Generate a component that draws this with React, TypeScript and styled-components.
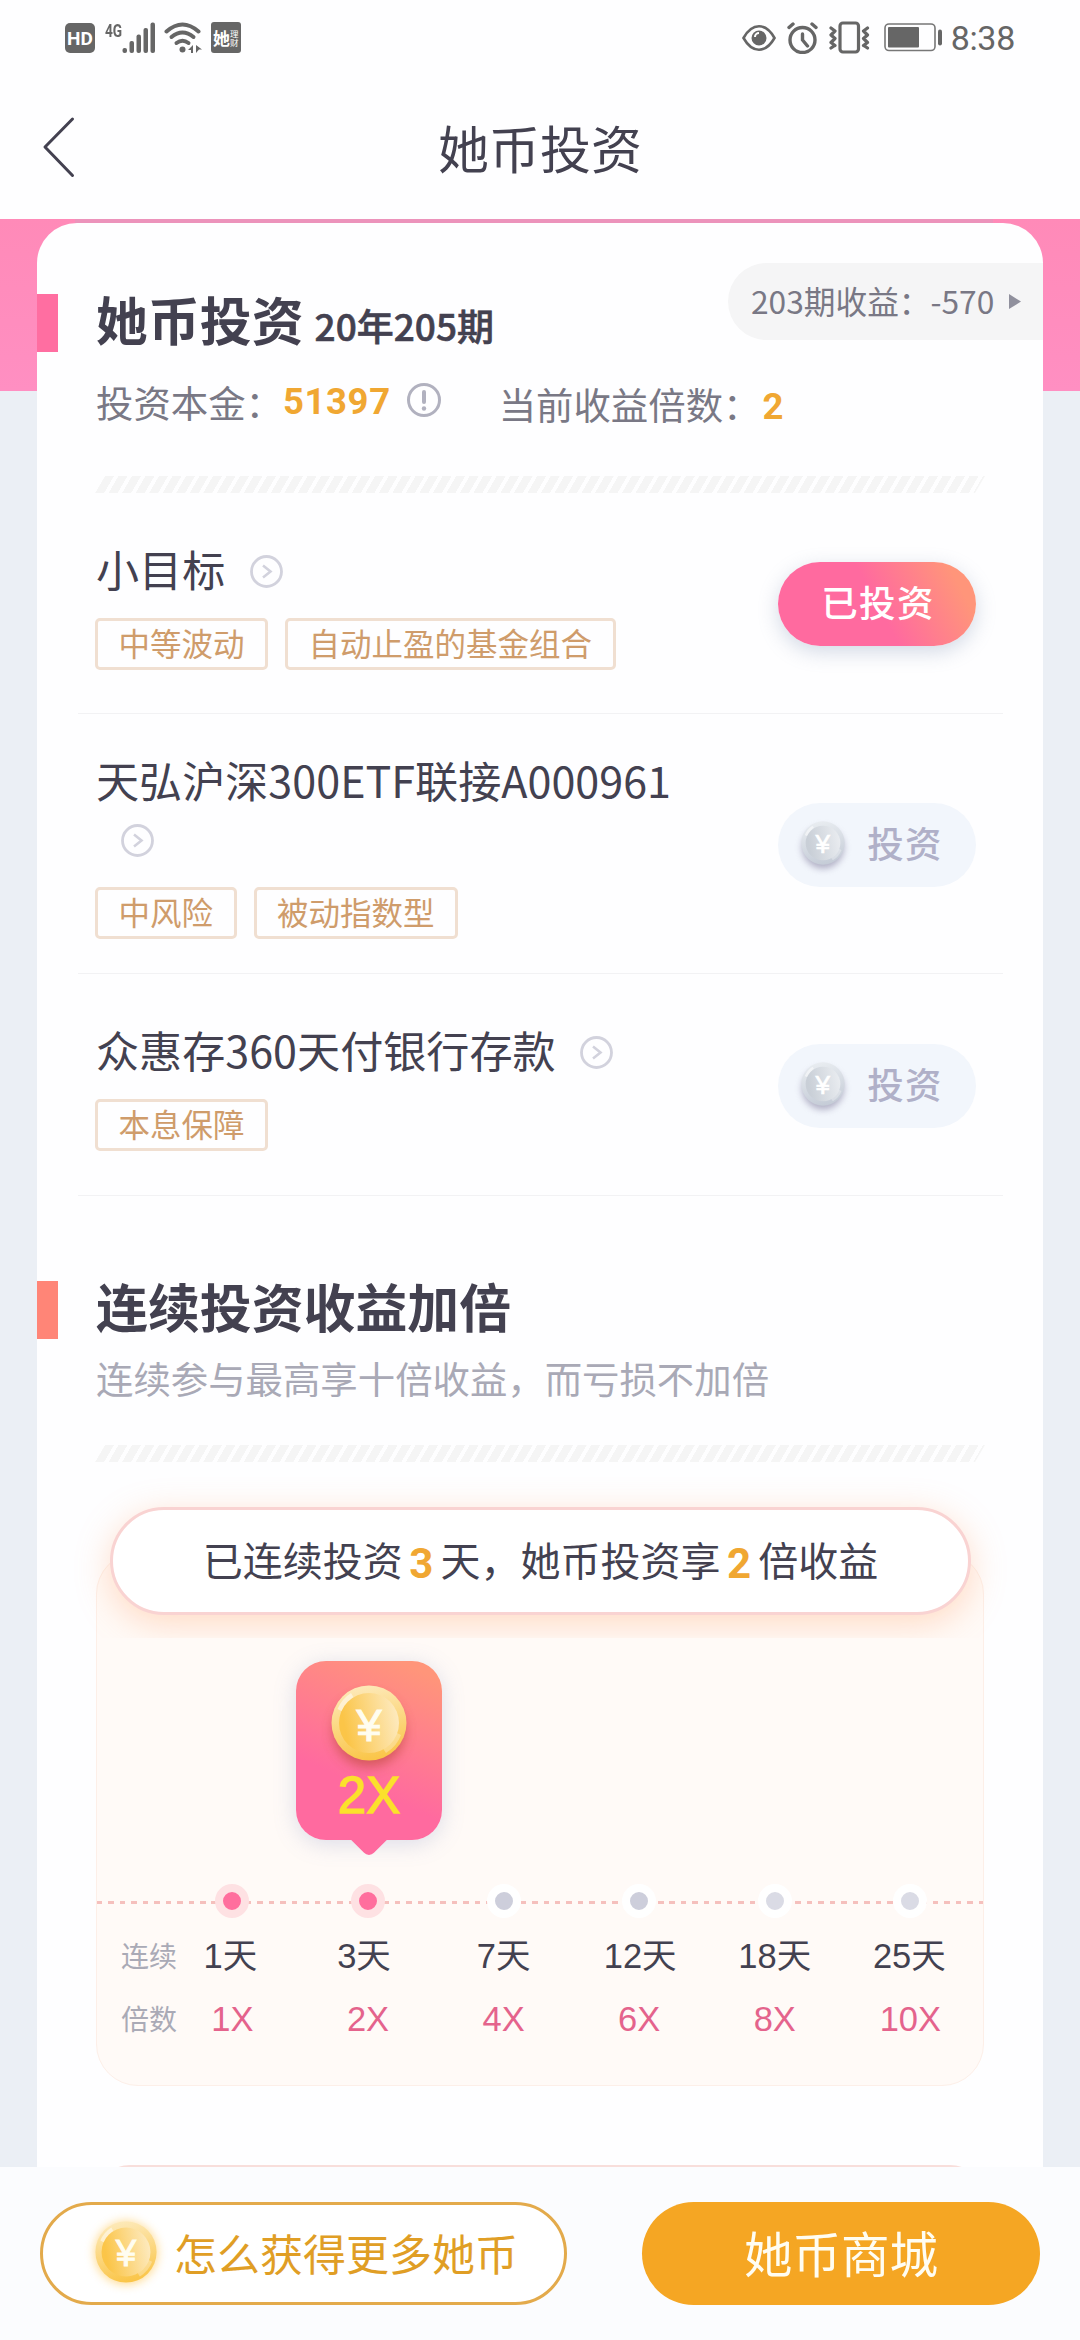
import React from "react";
import styled, { createGlobalStyle, css } from "styled-components";

const cjk = `"Noto Sans CJK SC", "Noto Sans", sans-serif`;
const ink = "#434150";

const GlobalStyle = createGlobalStyle`
  * { box-sizing: border-box; }
  body {
    margin: 0;
    background: #ebeff5;
    font-family: ${cjk};
    color: ${ink};
  }
`;

const Screen = styled.div`
  width: 1080px;
  height: 2340px;
  display: flex;
  flex-direction: column;
  overflow: hidden;
  background: #ebeff5;
`;

/* ---------- status bar ---------- */

const StatusBar = styled.div`
  height: 75px;
  flex: none;
  padding: 0 65px 0 65px;
  display: flex;
  align-items: center;
  justify-content: space-between;
  background: #fefeff;
  color: #666;
`;

const StatusGroup = styled.div`
  display: flex;
  align-items: center;
  height: 32px;
`;

const HdBadge = styled.span`
  width: 30px;
  height: 30px;
  border-radius: 5px;
  background: #666;
  color: #fff;
  font: 700 19px/31px Roboto, sans-serif;
  text-align: center;
`;

const NetworkLabel = styled.span`
  align-self: flex-start;
  width: 17px;
  margin: -1px 0 0 10px;
  font: 700 19px/20px Roboto, sans-serif;
  transform: scaleX(0.72);
  transform-origin: left;
`;

const SignalIcon = styled.svg`
  width: 33px;
  height: 32px;
`;

const WifiIcon = styled.svg`
  width: 38px;
  height: 32px;
  margin-left: 9px;
`;

const AppBadge = styled.span`
  display: flex;
  align-items: center;
  justify-content: center;
  width: 30px;
  height: 31px;
  margin-left: 9px;
  border-radius: 3px;
  background: #666;
  color: #fff;
`;

const AppBadgeMain = styled.span`
  width: 17px;
  font: 700 17px/28px ${cjk};
`;

const AppBadgeSide = styled.span`
  width: 9px;
  font: 400 8.5px/8.5px ${cjk};
`;

const StatusIcon = styled.svg<{ $gap?: number }>`
  flex: none;
  margin-left: ${(p) => p.$gap || 0}px;
  fill: none;
`;

const Clock = styled.span`
  margin-left: 9px;
  font: 400 34px/34px Roboto, sans-serif;
  letter-spacing: -0.3px;
`;

/* ---------- navigation bar ---------- */

const NavBar = styled.header`
  height: 144px;
  flex: none;
  display: grid;
  grid-template-columns: 1fr auto 1fr;
  align-items: center;
  background: #fefeff;
`;

const BackButton = styled.svg`
  width: 34px;
  height: 62px;
  margin: 0 0 1px 42px;
`;

const NavTitle = styled.h1`
  margin: 0 0 1px;
  font-size: 51px;
  line-height: 70px;
  font-weight: 400;
`;

/* ---------- content ---------- */

const Content = styled.main`
  flex: 1;
  min-height: 0;
  overflow: hidden;
  padding: 4px 37px 0;
  background:
    linear-gradient(#ec93bb, #ec93bb) 75px 0 / 918px 4px no-repeat,
    linear-gradient(#ff8ab8, #ff8fc2) 0 0 / 100% 172px no-repeat,
    #ebeff5;
`;

const Card = styled.section`
  position: relative;
  height: 2020px;
  background: #fefeff;
  border-radius: 40px 40px 0 0;
`;

const ProfitPill = styled.div`
  position: absolute;
  top: 40px;
  right: 0;
  width: 315px;
  height: 77px;
  padding: 0 0 3px 23px;
  border-radius: 39px 0 0 39px;
  background: #f5f5f6;
  color: #797885;
  display: flex;
  align-items: center;
  font-size: 31.7px;
  line-height: 70px;
  white-space: nowrap;
`;

const PlayArrow = styled.svg`
  width: 12px;
  height: 15px;
  margin: 3px 0 0 15px;
`;

const SectionHead = styled.div<{ $gap: number }>`
  display: flex;
  height: 58px;
  margin-top: ${(p) => p.$gap}px;
  &:first-child {
    margin-top: 0;
    padding-top: ${(p) => p.$gap}px;
    height: ${(p) => p.$gap + 58}px;
  }
`;

const Marker = styled.i<{ $color: string }>`
  width: 21px;
  height: 58px;
  margin-right: 38px;
  background: ${(p) => p.$color};
`;

const SectionTitle = styled.h2`
  margin: 0;
  font-size: 51.9px;
  line-height: 50px;
  font-weight: 700;
  white-space: nowrap;
`;

const Period = styled.span`
  margin-left: 11px;
  font-size: 37px;
  font-weight: 500;
  -webkit-text-stroke: 0.6px ${ink};
`;

const InfoRow = styled.div`
  display: flex;
  align-items: flex-start;
  height: 48px;
  margin: 26px 0 0 59px;
  font-size: 37.4px;
  line-height: 48px;
  color: #797885;
  white-space: nowrap;
`;

const InfoItem = styled.div<{ $left?: number; $drop?: number }>`
  display: flex;
  margin: ${(p) => p.$drop || 0}px 0 0 ${(p) => p.$left || 0}px;
`;

const Amount = styled.strong<{ $size: number; $pad?: string }>`
  font-family: Roboto, sans-serif;
  font-weight: 700;
  font-size: ${(p) => p.$size}px;
  letter-spacing: 0.6px;
  padding: ${(p) => p.$pad || "0"};
  color: #f0a732;
`;

const HintIcon = styled.svg`
  width: 36px;
  height: 36px;
  margin: 4px 0 0 15px;
`;

const Stripes = styled.div<{ $gap: number }>`
  width: 890px;
  height: 17px;
  margin: ${(p) => p.$gap}px 0 0 58px;
  clip-path: polygon(10px 0, 100% 0, calc(100% - 10px) 100%, 0 100%);
  background: repeating-linear-gradient(
    120deg,
    #f5f5f5 0 4.6px,
    #fefeff 4.8px 8.5px,
    #f5f5f5 8.7px 11.7px
  );
`;

const Subtitle = styled.p`
  margin: 15px 0 0 59px;
  font-size: 37.4px;
  line-height: 48px;
  color: #a9a9b6;
`;

/* ---------- products ---------- */

const Product = styled.article<{ $height: number; $top: number }>`
  display: flex;
  justify-content: space-between;
  height: ${(p) => p.$height}px;
  margin: 0 40px 0 41px;
  padding: 0 27px 0 17px;
  border-bottom: 1px solid #f2f2f4;
  & > :first-child {
    padding-top: ${(p) => p.$top}px;
  }
`;

const ProductInfo = styled.div`
  width: 600px;
`;

const ProductName = styled.h3`
  margin: 0 0 0 1px;
  font-size: 43.1px;
  line-height: 58px;
  font-weight: 400;
`;

const DetailIcon = styled.svg`
  width: 33px;
  height: 33px;
  margin-left: 24.5px;
  vertical-align: -0.5px;
`;

const Tags = styled.div`
  display: flex;
  gap: 17px;
  margin-top: 21px;
`;

const Tag = styled.span`
  height: 52px;
  padding: 0 20.5px;
  border: 3px solid #f0dfd1;
  border-radius: 5px;
  font-size: 31.5px;
  line-height: 43px;
  color: #cf9c6b;
  white-space: nowrap;
`;

const InvestButton = styled.button<{ $active: boolean }>`
  align-self: center;
  display: flex;
  align-items: center;
  justify-content: center;
  width: 198px;
  height: 84px;
  margin: 3px 0 0;
  border: 0;
  border-radius: 42px;
  font: 500 36.5px/50px ${cjk};
  letter-spacing: 1.3px;
  ${(p) =>
    p.$active
      ? css`
          margin-top: 1px;
          padding: 0 0 4px 2px;
          color: #fff;
          background: linear-gradient(62deg, #ff6a9f 50%, #ff957a 88%);
          box-shadow: 0 6px 20px rgba(120, 140, 175, 0.32);
        `
      : css`
          padding: 0 10px 4px 0;
          color: #b0b0c8;
          background: #f2f6fc;
        `}
`;

const CoinArt = styled.svg<{ $size: number; $gap?: number }>`
  width: ${(p) => p.$size}px;
  height: ${(p) => p.$size}px;
  flex: none;
  overflow: visible;
  margin-right: ${(p) => p.$gap || 0}px;
`;

/* ---------- multiplier chart ---------- */

const BannerWrap = styled.div`
  position: relative;
  z-index: 1;
  height: 176px;
  padding: 45px 72px 0 73px;
  overflow: hidden;
`;

const Banner = styled.div`
  height: 108px;
  border: 3px solid #f9d3d2;
  border-radius: 54px;
  background: #fff;
  box-shadow: 0 8px 34px rgba(255, 165, 110, 0.38);
  display: flex;
  justify-content: center;
  font-size: 40px;
  line-height: 98px;
  white-space: nowrap;
`;

const Panel = styled.div`
  height: 534px;
  width: 888px;
  margin: -86px 0 0 59px;
  padding-top: 108px;
  border: 1px solid #fdefe8;
  border-radius: 42px;
  background: #fffaf7;
`;

const Bubble = styled.div`
  position: relative;
  width: 146px;
  height: 179px;
  margin-left: 199px;
  padding-top: 24px;
  border-radius: 30px;
  display: flex;
  flex-direction: column;
  align-items: center;
  background: linear-gradient(204deg, #ff957a 8%, #ff6a9f 66%);
  box-shadow: 0 4px 22px rgba(120, 140, 190, 0.26);
  &::after {
    content: "";
    position: absolute;
    left: 59px;
    bottom: -12px;
    width: 28px;
    height: 28px;
    border-radius: 0 0 7px 0;
    background: #ff6a9f;
    transform: rotate(45deg);
  }
`;

const BubbleText = styled.span`
  position: relative;
  z-index: 1;
  margin-top: 6px;
  font: 400 51px/58px "Liberation Sans", Arial, sans-serif;
  -webkit-text-stroke: 1.4px #fbe02c;
  color: #fbe02c;
`;

const Timeline = styled.div`
  display: flex;
  height: 34px;
  margin-top: 44px;
  padding-left: 67.6px;
  background: repeating-linear-gradient(90deg, #f5c0bd 0 5.5px, transparent 5.5px 11.45px) 0 17px / 100% 3px
    no-repeat;
`;

const Slot = styled.div<{ $nudge?: number }>`
  width: 135.6px;
  flex: none;
  display: flex;
  align-items: center;
  justify-content: center;
  text-indent: ${(p) => p.$nudge || 0}px;
  white-space: nowrap;
`;

const Dot = styled.i<{ $on: boolean; $faded: boolean }>`
  width: 34px;
  height: 34px;
  border-radius: 50%;
  border: 8.5px solid ${(p) => (p.$on ? "#fee1e3" : "#fff")};
  background: ${(p) => (p.$on ? "#ff6e9d" : p.$faded ? "#dadbe5" : "#cdcedb")};
`;

const Row = styled.div<{ $tone: string; $first?: boolean }>`
  display: flex;
  height: 63px;
  margin-top: ${(p) => (p.$first ? 7 : 0)}px;
  font: 400 34.5px/63px "Liberation Sans", ${cjk};
  color: ${(p) => p.$tone};
`;

const RowLabel = styled.span`
  width: 67.6px;
  flex: none;
  padding-left: 24px;
  font: 400 28px/61px ${cjk};
  color: #aaaab6;
  white-space: nowrap;
`;

const NextPanel = styled.div`
  height: 90px;
  width: 888px;
  margin: 79px 0 0 59px;
  border: 3px solid #f8dedb;
  border-radius: 34px 34px 0 0;
`;

/* ---------- bottom actions ---------- */

const BottomBar = styled.footer`
  flex: none;
  height: 173px;
  display: flex;
  justify-content: space-between;
  padding: 35px 40px 0;
  background: #fbfcfe;
`;

const ActionButton = styled.button<{ $primary?: boolean }>`
  display: flex;
  align-items: center;
  justify-content: center;
  height: 103px;
  border-radius: 52px;
  white-space: nowrap;
  ${(p) =>
    p.$primary
      ? css`
          width: 398px;
          padding: 0 0 3px;
          border: 0;
          background: #f5a623;
          color: #fffdf2;
          font: 400 48.5px/70px ${cjk};
        `
      : css`
          width: 527px;
          padding: 0 0 3px 6px;
          border: 3px solid #e3aa4b;
          background: #fff;
          color: #e09e25;
          font: 400 43px/60px ${cjk};
        `}
`;

type CoinTone = "gold" | "silver";

const coinTones = {
  gold: { rimA: "#fdeabb", rimB: "#fac548", a: "#fbc548", b: "#fdeabf", mark: "#fffdf0" },
  silver: { rimA: "#e9edf1", rimB: "#c5ccd7", a: "#c9cfd7", b: "#e9ecf0", mark: "#ffffff" },
};

interface CoinProps {
  id: string;
  tone: CoinTone;
  size: number;
  gap?: number;
  shadow: string;
  glow?: boolean;
}

const Coin = ({ id, tone, size, gap, shadow, glow }: CoinProps) => {
  const t = coinTones[tone];
  return (
    <CoinArt $size={size} $gap={gap} viewBox="0 0 76 76">
      <defs>
        <linearGradient id={`${id}-rim`} x1="0.3" y1="0" x2="0.5" y2="1">
          <stop offset="0" stopColor={t.rimA} />
          <stop offset="1" stopColor={t.rimB} />
        </linearGradient>
        <linearGradient id={`${id}-face`} x1="0" y1="0.6" x2="1" y2="0.4">
          <stop offset="0.1" stopColor={t.a} />
          <stop offset="1" stopColor={t.b} />
        </linearGradient>
        <filter id={`${id}-blur`} x="-50%" y="-50%" width="200%" height="200%">
          <feGaussianBlur stdDeviation="6" />
        </filter>
      </defs>
      <circle cx="38" cy={glow ? 39 : 46} r={glow ? 39 : 36} fill={shadow} opacity="0.65" filter={`url(#${id}-blur)`} />
      <circle cx="38" cy="38" r="37.5" fill={`url(#${id}-rim)`} />
      <path d="M6.5 24A35 35 0 0 1 20 8l3.5 6A28 28 0 0 0 12 27z" fill="#fff" opacity="0.5" />
      <path d="M70 50a35 35 0 0 1-15 18l-4-6a28 28 0 0 0 13-15z" fill="#fff" opacity="0.3" />
      <circle cx="38" cy="38" r="30" fill={`url(#${id}-face)`} />
      <text
        x="38"
        y="55.5"
        textAnchor="middle"
        fontFamily="Liberation Sans, Arial, sans-serif"
        fontSize="45"
        fill={t.mark}
        stroke={t.mark}
        strokeWidth="1.2"
      >
        ¥
      </text>
    </CoinArt>
  );
};

const Detail = () => (
  <DetailIcon viewBox="0 0 33 33" fill="none" stroke="#d2d2dd" strokeWidth="2.8">
    <circle cx="16.5" cy="16.5" r="15" />
    <path d="M13 10.5l7.5 6-7.5 6" strokeWidth="2.6" />
  </DetailIcon>
);

const products = [
  { name: "小目标", tags: ["中等波动", "自动止盈的基金组合"], active: true, height: 221, top: 46 },
  { name: "天弘沪深300ETF联接A000961", tags: ["中风险", "被动指数型"], active: false, height: 260, top: 36 },
  { name: "众惠存360天付银行存款", tags: ["本息保障"], active: false, height: 222, top: 46 },
];

const steps = [
  { days: "1天", rate: "1X", nudge: -4 },
  { days: "3天", rate: "2X", nudge: -8 },
  { days: "7天", rate: "4X", nudge: 0 },
  { days: "12天", rate: "6X", nudge: 2 },
  { days: "18天", rate: "8X", nudge: 0 },
  { days: "25天", rate: "10X", nudge: -2 },
];

export default function App() {
  return (
    <Screen>
      <GlobalStyle />
      <StatusBar>
        <StatusGroup>
          <HdBadge>HD</HdBadge>
          <NetworkLabel>4G</NetworkLabel>
          <SignalIcon viewBox="0 0 33 32" fill="#666">
            <rect x="0.5" y="26" width="4.5" height="5" rx="2" />
            <rect x="7.5" y="19" width="4.5" height="12" rx="2" />
            <rect x="14.5" y="12.5" width="4.5" height="18.5" rx="2" />
            <rect x="21.5" y="6" width="4.5" height="25" rx="2" />
            <rect x="28.5" y="0.5" width="4.5" height="30.5" rx="2" />
          </SignalIcon>
          <WifiIcon viewBox="0 0 38 32" fill="none" stroke="#666" strokeWidth="4" strokeLinecap="round">
            <path d="M2.5 9.5Q18.5 -4.5 34.5 9.5" />
            <path d="M7.5 15Q18.5 6 29.5 15" />
            <path d="M12.5 21Q18.5 16.5 24.5 21" />
            <circle cx="18.5" cy="27.5" r="3" fill="#666" stroke="none" />
            <path d="M24 28l5-5v8h-2v-3zM32 23l6 4.5h-3l-3 3.5z" fill="#666" stroke="none" />
          </WifiIcon>
          <AppBadge>
            <AppBadgeMain>她</AppBadgeMain>
            <AppBadgeSide>理财</AppBadgeSide>
          </AppBadge>
        </StatusGroup>
        <StatusGroup>
          <StatusIcon width="34" height="28" viewBox="0 0 34 28" stroke="#666" strokeWidth="2.6">
            <path d="M1.5 14C6 6 11 2.3 17 2.3S28 6 32.5 14C28 22 23 25.7 17 25.7S6 22 1.5 14z" />
            <circle cx="17" cy="14" r="7.5" fill="#666" stroke="none" />
            <path d="M13 13a4 4 0 0 1 4-4" stroke="#fff" strokeWidth="2" />
          </StatusIcon>
          <StatusIcon $gap={11} width="31" height="32" viewBox="0 0 31 32" stroke="#666" strokeWidth="3.4" strokeLinecap="round">
            <circle cx="15.5" cy="18" r="12.5" />
            <path d="M15.5 12v6l5 6M2 5.5l4-3.5M29 5.5L25 2" />
          </StatusIcon>
          <StatusIcon $gap={11} width="41" height="33" viewBox="0 0 41 33" stroke="#666" strokeWidth="3.2" strokeLinecap="round" strokeLinejoin="round">
            <rect x="11" y="2" width="18.5" height="29" rx="3" />
            <path d="M2 7l4 3-4 4 4 3.5-4 4 4 3M2 27l3-2M38.5 7l-4 3 4 4-4 3.5 4 4-4 3M38.5 27l-3-2" />
          </StatusIcon>
          <StatusIcon $gap={14} width="58" height="29" viewBox="0 0 58 29" stroke="#777">
            <rect x="1" y="1" width="50" height="26.5" rx="4" strokeWidth="1.6" />
            <rect x="4" y="4" width="31" height="20.5" rx="1" fill="#666" stroke="none" />
            <rect x="54" y="6.5" width="4" height="16" rx="2" fill="#666" stroke="none" />
          </StatusIcon>
          <Clock>8:38</Clock>
        </StatusGroup>
      </StatusBar>

      <NavBar>
        <BackButton viewBox="0 0 34 62" fill="none" stroke={ink} strokeWidth="3" strokeLinecap="round" strokeLinejoin="round">
          <path d="M30.5 3L3 31l27.5 28.5" />
        </BackButton>
        <NavTitle>她币投资</NavTitle>
      </NavBar>

      <Content>
        <Card>
          <SectionHead $gap={71}>
            <Marker $color="#ff6ea1" />
            <SectionTitle>
              她币投资<Period>20年205期</Period>
            </SectionTitle>
          </SectionHead>
          <ProfitPill>
            203期收益：-570
            <PlayArrow viewBox="0 0 12 15" fill="#90909d">
              <path d="M0 0l12 7.5L0 15z" />
            </PlayArrow>
          </ProfitPill>
          <InfoRow>
            <InfoItem>
              投资本金：<Amount $size={36.5}>51397</Amount>
              <HintIcon viewBox="0 0 36 36" fill="none" stroke="#b1b1bf" strokeWidth="3">
                <circle cx="18" cy="18" r="15.5" />
                <path d="M18 10v10" strokeWidth="4" strokeLinecap="round" />
                <circle cx="18" cy="26.5" r="2.2" fill="#b1b1bf" stroke="none" />
              </HintIcon>
            </InfoItem>
            <InfoItem $left={57} $drop={2}>
              当前收益倍数：<Amount $size={36.5} $pad="3px 0 0 2px">2</Amount>
            </InfoItem>
          </InfoRow>
          <Stripes $gap={50} />

          {products.map((p) => (
            <Product key={p.name} $height={p.height} $top={p.top}>
              <ProductInfo>
                <ProductName>
                  {p.name}
                  <Detail />
                </ProductName>
                <Tags>
                  {p.tags.map((t) => (
                    <Tag key={t}>{t}</Tag>
                  ))}
                </Tags>
              </ProductInfo>
              <InvestButton $active={p.active}>
                {!p.active && <Coin id={`silver-${p.height}`} tone="silver" size={44} gap={22} shadow="#8c88a6" />}
                {p.active ? "已投资" : "投资"}
              </InvestButton>
            </Product>
          ))}

          <SectionHead $gap={85}>
            <Marker $color="#ff8577" />
            <SectionTitle>连续投资收益加倍</SectionTitle>
          </SectionHead>
          <Subtitle>连续参与最高享十倍收益，而亏损不加倍</Subtitle>
          <Stripes $gap={43} />

          <BannerWrap>
            <Banner>
              已连续投资
              <Amount $size={42} $pad="5px 6.5px 0">3</Amount>
              天，她币投资享
              <Amount $size={42} $pad="5px 6.5px 0">2</Amount>
              倍收益
            </Banner>
          </BannerWrap>
          <Panel>
            <Bubble>
              <Coin id="bubble" tone="gold" size={76} shadow="#c04a3c" />
              <BubbleText>2X</BubbleText>
            </Bubble>
            <Timeline>
              {steps.map((s, i) => (
                <Slot key={s.days}>
                  <Dot $on={i < 2} $faded={i > 3} />
                </Slot>
              ))}
            </Timeline>
            <Row $tone={ink} $first>
              <RowLabel>连续</RowLabel>
              {steps.map((s) => (
                <Slot key={s.days} $nudge={s.nudge}>
                  {s.days}
                </Slot>
              ))}
            </Row>
            <Row $tone="#e4638c">
              <RowLabel>倍数</RowLabel>
              {steps.map((s) => (
                <Slot key={s.rate}>{s.rate}</Slot>
              ))}
            </Row>
          </Panel>
          <NextPanel />
        </Card>
      </Content>

      <BottomBar>
        <ActionButton>
          <Coin id="action" tone="gold" size={62} gap={17} shadow="#ffc95c" glow />
          怎么获得更多她币
        </ActionButton>
        <ActionButton $primary>她币商城</ActionButton>
      </BottomBar>
    </Screen>
  );
}
